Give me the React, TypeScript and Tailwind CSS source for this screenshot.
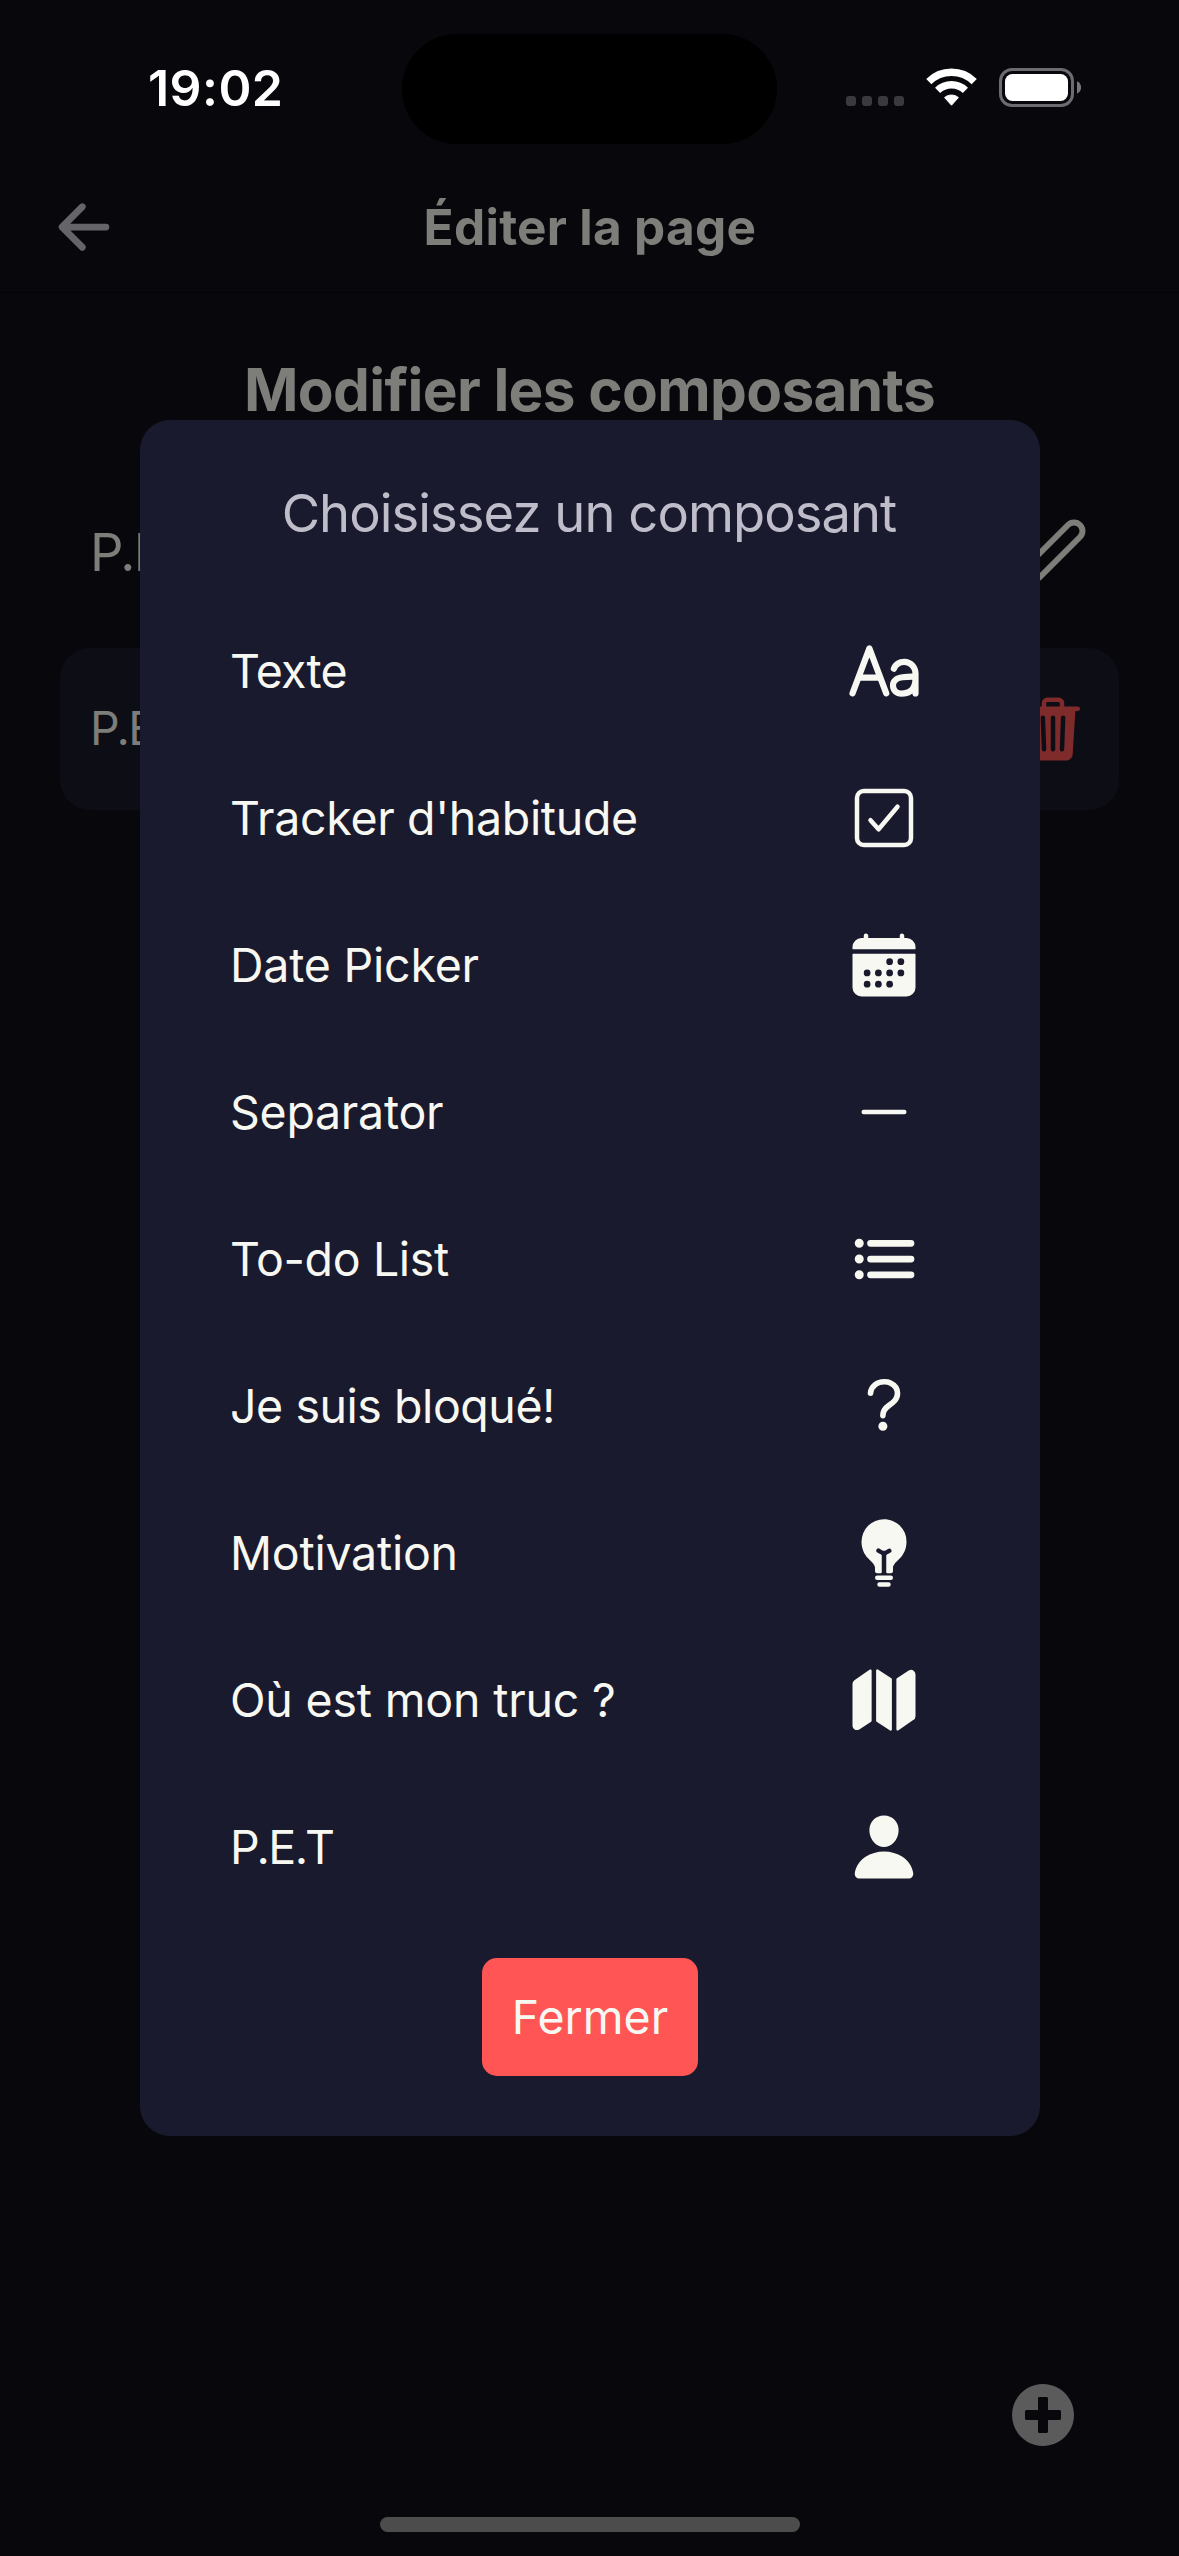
import type { IconType } from "react-icons";
import {
  IoArrowBack,
  IoBulb,
  IoCalendar,
  IoCheckboxOutline,
  IoHelp,
  IoList,
  IoMap,
  IoPerson,
  IoRemove,
  IoText,
  IoTrash,
} from "react-icons/io5";
import { FaPlusCircle } from "react-icons/fa";
import { FiEdit2 } from "react-icons/fi";

type Item = { label: string; icon: IconType; tracking: string };

const items: Item[] = [
  { label: "Texte", icon: IoText, tracking: "tracking-[-0.75px]" },
  { label: "Tracker d'habitude", icon: IoCheckboxOutline, tracking: "tracking-[-0.33px]" },
  { label: "Date Picker", icon: IoCalendar, tracking: "tracking-[-0.22px]" },
  { label: "Separator", icon: IoRemove, tracking: "tracking-[-0.28px]" },
  { label: "To-do List", icon: IoList, tracking: "tracking-[-0.36px]" },
  { label: "Je suis bloqué!", icon: IoHelp, tracking: "tracking-[-0.45px]" },
  { label: "Motivation", icon: IoBulb, tracking: "tracking-[-0.24px]" },
  { label: "Où est mon truc ?", icon: IoMap, tracking: "tracking-[-0.19px]" },
  { label: "P.E.T", icon: IoPerson, tracking: "tracking-[-1.58px]" },
];

function WifiIcon() {
  return (
    <svg width="51" height="38" viewBox="0 0 51 38" fill="none">
      <path d="M25.5 37.2 18.6 29.6C22.3 26.2 28.7 26.2 32.4 29.6Z" fill="white" stroke="white" strokeWidth="1" strokeLinejoin="round" />
      <path d="M11.6 22.4A20 20 0 0 1 39.4 22.4" stroke="white" strokeWidth="7.4" />
      <path d="M2.8 13.6A32.4 32.4 0 0 1 48.2 13.6" stroke="white" strokeWidth="7.4" />
    </svg>
  );
}

function BatteryIcon() {
  return (
    <svg width="83" height="40" viewBox="0 0 83 40" fill="none">
      <rect x="1.5" y="1.5" width="72" height="36" rx="11.5" stroke="#6c6c70" strokeWidth="3" />
      <rect x="6" y="6" width="63" height="27" rx="7.5" fill="white" />
      <path d="M78 13.3C83.4 15.5 83.4 23.5 78 25.7Z" fill="#77777a" />
    </svg>
  );
}

function StatusBar() {
  return (
    <div className="flex h-[177px] justify-between pl-[148px] pr-[97px]">
      <div className="mt-[58px] h-[60px] w-[254px] text-[50px] font-semibold leading-[60px] tracking-[0.45px] text-white">
        19:02
      </div>
      <div className="mt-[34px] h-[110px] w-[375px] rounded-full bg-black" />
      <div className="mt-[68px] flex h-[40px] flex-1 justify-end">
        <div className="mr-[22px] mt-[28px] flex gap-[6px]">
          <span className="size-[10px] rounded-[3px] bg-[#39393e]" />
          <span className="size-[10px] rounded-[3px] bg-[#39393e]" />
          <span className="size-[10px] rounded-[3px] bg-[#39393e]" />
          <span className="size-[10px] rounded-[3px] bg-[#39393e]" />
        </div>
        <div className="mr-[22px]">
          <WifiIcon />
        </div>
        <BatteryIcon />
      </div>
    </div>
  );
}

function PageBehind() {
  return (
    <>
      <header className="grid h-[100px] grid-cols-[1fr_auto_1fr] items-center px-[48px]">
        <IoArrowBack className="size-[72px] text-[#656469]" />
        <h1 className="pl-px text-[49.5px] font-bold leading-[60px] tracking-[0.29px]">Éditer la page</h1>
      </header>
      <div className="mt-[15px] h-px bg-[#040408]" />
      <h2 className="mt-[61px] text-center text-[58.5px] font-bold leading-[72px] tracking-[-0.64px]">
        Modifier les composants
      </h2>
      <div className="mx-[60px] mt-[45px] flex h-[162px] items-center justify-between px-[30px]">
        <span className="text-[52.5px] tracking-[-1.6px]">P.E.T</span>
        <FiEdit2 className="size-[72px]" />
      </div>
      <div className="mx-[60px] mt-[15px] flex h-[162px] items-center justify-between rounded-[30px] bg-[#0d0d15] px-[30px]">
        <span className="text-[46.5px] tracking-[-1.58px]">P.E.T</span>
        <IoTrash className="size-[72px] text-[#802b2b]" />
      </div>
      <div className="mt-auto flex justify-end pr-[104px]">
        <FaPlusCircle className="size-[64px] text-[#5b5b5b]" />
      </div>
      <div className="mb-[24px] mt-[70px] flex justify-center">
        <div className="h-[15px] w-[420px] rounded-full bg-[#4c4c4c]" />
      </div>
    </>
  );
}

function Picker() {
  return (
    <div className="flex h-[1716px] w-[900px] flex-col items-center rounded-[30px] bg-[#1a1a2e]">
      <h3 className="mt-[60px] h-[117px] pr-[2px] text-[52.5px] leading-[66px] tracking-[-0.94px] text-[#bfbdca]">
        Choisissez un composant
      </h3>
      <ul className="w-full pl-[90px] pr-[120px]">
        {items.map(({ label, icon: Icon, tracking }) => (
          <li key={label} className="flex h-[147px] items-center justify-between text-[#f8f8f2]">
            <span className={`text-[46.5px] leading-[60px] ${tracking}`}>{label}</span>
            <Icon className="size-[72px]" />
          </li>
        ))}
      </ul>
      <button className="mt-[38px] flex h-[118px] w-[216px] items-center justify-center rounded-[15px] bg-[#ff5555] text-[46.5px] leading-[60px] text-[#f8f8f2]">
        Fermer
      </button>
    </div>
  );
}

export default function App() {
  return (
    <div className="relative flex h-[2556px] w-[1179px] flex-col overflow-hidden bg-[#07070c] font-['Inter',sans-serif] text-[#7d7d79]">
      <StatusBar />
      <PageBehind />
      <div className="absolute inset-0 flex items-center justify-center pl-px">
        <Picker />
      </div>
    </div>
  );
}
